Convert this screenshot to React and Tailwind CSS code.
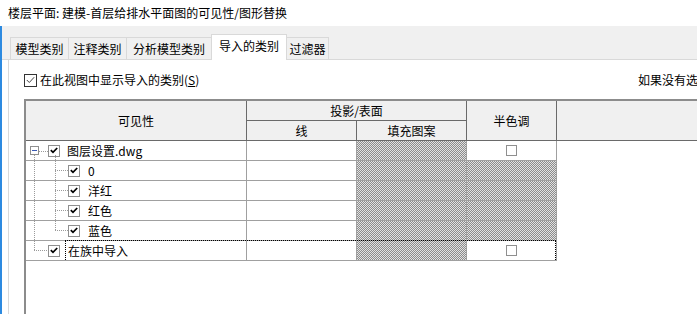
import React from 'react'

const ROWS = [
  { key: 'dwg', label: '图层设置.dwg', level: 0, half: 'box' },
  { key: '0', label: '0', level: 1, half: 'pattern' },
  { key: 'magenta', label: '洋红', level: 1, half: 'pattern' },
  { key: 'red', label: '红色', level: 1, half: 'pattern' },
  { key: 'blue', label: '蓝色', level: 1, half: 'pattern' },
  { key: 'family', label: '在族中导入', level: 2, half: 'box' },
]

const pattern =
  'bg-[image:repeating-conic-gradient(#8c8c8c_0_25%,#e2e2e2_0_50%)] bg-[length:2px_2px]'

function Check({ checked = true }) {
  return (
    <span className="w-[12px] h-[12px] shrink-0 border border-[#8f8f8f] bg-white flex items-center justify-center">
      {checked && (
        <svg width="8" height="7" viewBox="0 0 8 7">
          <path d="M0.8 3.2 L3 5.4 L7.2 1" stroke="#000" strokeWidth="1.7" fill="none" />
        </svg>
      )}
    </span>
  )
}

function TreeLines() {
  return (
    <svg className="absolute left-0 top-0 pointer-events-none" width="80" height="120">
      <g stroke="#9a9a9a" strokeWidth="1" strokeDasharray="1 1" fill="none">
        <line x1="8.5" y1="14" x2="8.5" y2="109" />
        <line x1="29.5" y1="14" x2="29.5" y2="89" />
        <line x1="13" y1="10.5" x2="22" y2="10.5" />
        <line x1="29" y1="29.5" x2="42" y2="29.5" />
        <line x1="29" y1="49.5" x2="42" y2="49.5" />
        <line x1="29" y1="69.5" x2="42" y2="69.5" />
        <line x1="29" y1="89.5" x2="42" y2="89.5" />
        <line x1="8" y1="109.5" x2="22" y2="109.5" />
      </g>
    </svg>
  )
}

function NameCell({ row }) {
  if (row.level === 0) {
    return (
      <div className="w-[221px] h-full border-r border-[#a0a0a0] flex items-center">
        <span className="ml-[4px] w-[9px] h-[9px] border border-[#8f8f8f] bg-white flex items-center justify-center">
          <span className="w-[5px] h-[1px] bg-[#3b5bb5]" />
        </span>
        <span className="ml-[9px]">
          <Check />
        </span>
        <span className="ml-[7px]">{row.label}</span>
      </div>
    )
  }
  if (row.level === 1) {
    return (
      <div className="w-[221px] h-full border-r border-[#a0a0a0] flex items-center">
        <span className="ml-[42px]">
          <Check />
        </span>
        <span className="ml-[8px]">{row.label}</span>
      </div>
    )
  }
  return (
    <div className="w-[221px] h-full border-r border-[#a0a0a0] flex items-center">
      <span className="ml-[22px]">
        <Check />
      </span>
      <span className="ml-[8px]">{row.label}</span>
    </div>
  )
}

function Tab({ label, width, first }) {
  return (
    <div
      className={
        'h-[22px] bg-[#f0f0f0] border-t border-r border-[#d9d9d9] flex items-center justify-center ' +
        (first ? 'border-l' : '')
      }
      style={{ width }}
    >
      {label}
    </div>
  )
}

export default function App() {
  return (
    <div className="w-[697px] h-[314px] bg-white overflow-hidden flex flex-col text-[12px] leading-[16px] text-black font-['Noto_Sans_CJK_SC','Noto_Sans',sans-serif]">
      <div className="h-[26px] shrink-0 pl-[8px] flex items-center">
        楼层平面: 建模-首层给排水平面图的可见性/图形替换
      </div>

      <div className="flex-1 flex flex-col border-l-2 border-[#2d8ae0] min-h-0">
        <div className="h-[34px] shrink-0 bg-[#f0f0f0] border-b border-[#d9d9d9] flex items-end pl-[8px]">
          <Tab label="模型类别" width={59} first />
          <Tab label="注释类别" width={58} />
          <Tab label="分析模型类别" width={85} />
          <div className="w-[76px] h-[26px] -mb-px -ml-px bg-white border-t border-r border-l border-[#d9d9d9] flex items-center justify-center pb-[3px]">
            导入的类别
          </div>
          <Tab label="过滤器" width={42} />
        </div>

        <div className="flex-1 ml-[6px] border-l border-[#d9d9d9] bg-white min-h-0 overflow-hidden">
          <div className="pt-[12px] pl-[15px] flex items-center whitespace-nowrap">
            <div className="w-[614px] shrink-0 flex items-center">
              <span className="w-[13px] h-[13px] border border-[#333] bg-white flex items-center justify-center">
                <svg width="9" height="8" viewBox="0 0 9 8">
                  <path d="M0.8 4 L3.3 6.5 L8.2 1.2" stroke="#444" strokeWidth="1" fill="none" />
                </svg>
              </span>
              <span className="ml-[3px]">
                在此视图中显示导入的类别(<span className="underline">S</span>)
              </span>
            </div>
            <span className="shrink-0">如果没有选择某个类别，则该类别将不可见。</span>
          </div>

          <div className="mt-[11px] ml-[15px] border-t-2 border-l-2 border-[#8c8c8c] h-[220px]">
            <div className="h-[40px] flex bg-[#f0f0f0] border-b border-[#6a6a6a]">
              <div className="w-[221px] border-r border-[#6a6a6a] flex items-center justify-center">
                可见性
              </div>
              <div className="w-[220px] border-r border-[#6a6a6a] flex flex-col">
                <div className="h-[20px] border-b border-[#6a6a6a] flex items-center justify-center">
                  投影/表面
                </div>
                <div className="flex-1 flex">
                  <div className="w-[110px] border-r border-[#6a6a6a] flex items-center justify-center">
                    线
                  </div>
                  <div className="flex-1 flex items-center justify-center">填充图案</div>
                </div>
              </div>
              <div className="w-[90px] border-r border-[#6a6a6a] flex items-center justify-center">
                半色调
              </div>
              <div className="flex-1" />
            </div>

            <div className="relative w-[531px]">
              {ROWS.map((row, i) => (
                <div key={row.key} className="relative h-[20px] flex border-b border-[#a0a0a0]">
                  <NameCell row={row} />
                  <div className="w-[110px] h-full border-r border-[#a0a0a0] bg-white" />
                  <div className={'w-[110px] h-full border-r border-[#a0a0a0] ' + pattern} />
                  {row.half === 'box' ? (
                    <div className="w-[90px] h-full border-r border-[#a0a0a0] bg-white flex items-center justify-center">
                      <span className="w-[11px] h-[11px] border border-[#8f8f8f] bg-white" />
                    </div>
                  ) : (
                    <div className={'w-[90px] h-full border-r border-[#a0a0a0] ' + pattern} />
                  )}
                  {i === ROWS.length - 1 && (
                    <div className="absolute left-[39px] top-[-1px] right-[1px] bottom-0 border-t border-l border-r border-dotted border-black pointer-events-none" />
                  )}
                </div>
              ))}
              <TreeLines />
            </div>
          </div>
        </div>
      </div>
    </div>
  )
}
